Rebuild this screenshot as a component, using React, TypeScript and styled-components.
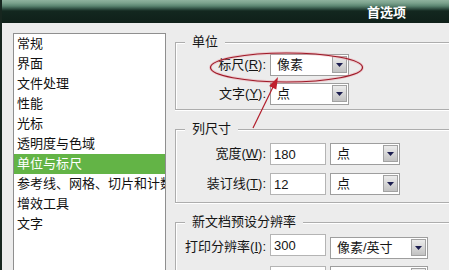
import React from "react";
import styled, { createGlobalStyle } from "styled-components";

const categories = [
  "常规",
  "界面",
  "文件处理",
  "性能",
  "光标",
  "透明度与色域",
  "单位与标尺",
  "参考线、网格、切片和计数",
  "增效工具",
  "文字",
];

const GlobalStyle = createGlobalStyle`
  html, body {
    margin: 0;
    padding: 0;
    background: #ececec;
    overflow: hidden;
  }
  body {
    font-family: "Liberation Sans", "Noto Sans CJK SC", sans-serif;
    font-size: 13px;
    color: #151515;
  }
`;

function FieldLabel({ name, hotkey }: { name: string; hotkey: string }) {
  return (
    <Label>
      {name}(<Key>{hotkey}</Key>):
    </Label>
  );
}

function Combo({
  value,
  width,
  align,
}: {
  value: string;
  width: number;
  align?: string;
}) {
  return (
    <ComboBox $width={width} $align={align}>
      <ComboText>{value}</ComboText>
      <DropButton>
        <svg width="7" height="4" viewBox="0 0 7 4">
          <polygon points="0,0 7,0 3.5,4" fill="#1b1d4f" />
        </svg>
      </DropButton>
    </ComboBox>
  );
}

export default function App() {
  return (
    <Window>
      <GlobalStyle />
      <TitleBar>
        <Title>首选项</Title>
      </TitleBar>

      <Body>
        <CategoryList>
          {categories.map((c) => (
            <CategoryItem key={c} $active={c === "单位与标尺"}>
              {c}
            </CategoryItem>
          ))}
        </CategoryList>

        <SettingsPane>
          <Group $pad="4px 0 4px">
            <GroupTitle>单位</GroupTitle>
            <Rows $gap={7}>
              <Row>
                <FieldLabel name="标尺" hotkey="R" />
                <Combo value="像素" width={79} />
              </Row>
              <Row>
                <FieldLabel name="文字" hotkey="Y" />
                <Combo value="点" width={79} />
              </Row>
            </Rows>
          </Group>

          <Group $pad="6px 0 7px">
            <GroupTitle>列尺寸</GroupTitle>
            <Rows $gap={8}>
              <Row>
                <FieldLabel name="宽度" hotkey="W" />
                <TextField readOnly value="180" />
                <Combo value="点" width={70} />
              </Row>
              <Row>
                <FieldLabel name="装订线" hotkey="T" />
                <TextField readOnly value="12" />
                <Combo value="点" width={70} />
              </Row>
            </Rows>
          </Group>

          <Group $pad="4px 0 7px">
            <GroupTitle>新文档预设分辨率</GroupTitle>
            <Rows $gap={7}>
              <Row $height={25}>
                <FieldLabel name="打印分辨率" hotkey="I" />
                <TextField readOnly value="300" $align="flex-start" />
                <Combo value="像素/英寸" width={98} align="flex-end" />
              </Row>
              <Row $height={25}>
                <FieldLabel name="屏幕分辨率" hotkey="S" />
                <TextField readOnly value="72" $align="flex-start" />
                <Combo value="像素/英寸" width={98} align="flex-start" />
              </Row>
            </Rows>
          </Group>
        </SettingsPane>
      </Body>

      <Annotation viewBox="0 0 449 270" width="449" height="270">
        <ellipse
          cx="284.5"
          cy="67.5"
          rx="76"
          ry="14.5"
          fill="none"
          stroke="#e8a0a8"
          strokeOpacity="0.45"
          strokeWidth="3"
        />
        <ellipse
          cx="284.5"
          cy="67.5"
          rx="76"
          ry="14.5"
          fill="none"
          stroke="#9e1826"
          strokeWidth="1.2"
        />
        <line
          x1="251"
          y1="128"
          x2="271"
          y2="87"
          stroke="#b21e2b"
          strokeWidth="1.2"
        />
        <polygon points="276,77 274.3,89.5 267.1,86" fill="#c0202e" />
      </Annotation>
    </Window>
  );
}

const Window = styled.div`
  position: relative;
  width: 449px;
  height: 270px;
  box-sizing: border-box;
  border-left: 2px solid #17261f;
  background: #ececec;
  overflow: hidden;
  display: flex;
  flex-direction: column;
`;

const TitleBar = styled.div`
  height: 23px;
  flex-shrink: 0;
  display: flex;
  align-items: center;
  justify-content: flex-end;
  padding-right: 43px;
  background: linear-gradient(
    to bottom,
    #8fb29e 0px,
    #7ba28d 3px,
    #5a8470 6px,
    #2d4b3f 9px,
    #13271f 11px,
    #0f2019 23px
  );
`;

const Title = styled.span`
  font-family: "Noto Sans CJK SC", sans-serif;
  font-size: 13px;
  font-weight: 700;
  line-height: 16px;
  color: #ffffff;
`;

const Body = styled.div`
  flex: 1;
  min-height: 0;
  display: flex;
  gap: 9px;
  padding: 10px 0 0 11px;
`;

const CategoryList = styled.ul`
  list-style: none;
  margin: 0;
  padding: 0;
  width: 153px;
  height: 260px;
  flex-shrink: 0;
  box-sizing: border-box;
  border: 1px solid #8f8f8f;
  background: #ffffff;
  overflow: hidden;
`;

const CategoryItem = styled.li<{ $active: boolean }>`
  height: 20px;
  line-height: 20px;
  padding-left: 3px;
  white-space: nowrap;
  color: ${({ $active }) => ($active ? "#ffffff" : "#111111")};
  background: ${({ $active }) => ($active ? "#63b446" : "transparent")};
`;

const SettingsPane = styled.div`
  width: 300px;
  flex-shrink: 0;
  display: flex;
  flex-direction: column;
  gap: 11px;
  padding-top: 1px;
`;

const Group = styled.fieldset<{ $pad: string }>`
  margin: 0;
  min-width: 0;
  padding: ${({ $pad }) => $pad};
  border: 1px solid #adadad;
  box-shadow: inset 1px 1px 0 #ffffff, 0 1px 0 #ffffff;
`;

const GroupTitle = styled.legend`
  margin-left: 9px;
  padding: 0 7px;
  line-height: 16px;
  background: #ececec;
  color: #151515;
`;

const Rows = styled.div<{ $gap: number }>`
  display: flex;
  flex-direction: column;
  gap: ${({ $gap }) => $gap}px;
`;

const Row = styled.div<{ $height?: number }>`
  display: flex;
  align-items: center;
  gap: 4px;
  height: ${({ $height }) => $height ?? 22}px;
`;

const Label = styled.span`
  width: 90px;
  text-align: right;
  white-space: nowrap;
  line-height: 16px;
`;

const Key = styled.span`
  text-decoration: underline;
`;

const TextField = styled.input<{ $align?: string }>`
  width: 56px;
  height: 22px;
  box-sizing: border-box;
  margin: 0;
  padding: 0 3px;
  border: 1px solid #b4b4b4;
  background: #ffffff;
  font-family: "Liberation Sans", "Noto Sans CJK SC", sans-serif;
  font-size: 13px;
  color: #151515;
  outline: none;
  align-self: ${({ $align }) => $align ?? "center"};
`;

const ComboBox = styled.div<{ $width: number; $align?: string }>`
  width: ${({ $width }) => $width}px;
  height: 22px;
  box-sizing: border-box;
  display: flex;
  align-items: stretch;
  padding: 1px 1px 2px 6px;
  border: 1px solid #9e9e9e;
  background: #ffffff;
  align-self: ${({ $align }) => $align ?? "center"};
`;

const ComboText = styled.span`
  flex: 1;
  line-height: 18px;
  white-space: nowrap;
  overflow: hidden;
`;

const DropButton = styled.span`
  width: 15px;
  box-sizing: border-box;
  display: flex;
  align-items: center;
  justify-content: center;
  border: 1px solid #a2a2a2;
  background: linear-gradient(to bottom, #ececec, #c2c2c2);
`;

const Annotation = styled.svg`
  position: absolute;
  top: 0;
  left: 0;
  pointer-events: none;
`;
